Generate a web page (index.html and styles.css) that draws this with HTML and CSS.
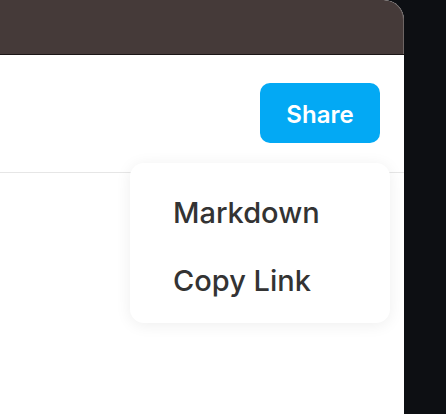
FILE: index.html
```html
<!DOCTYPE html>
<html lang="en">
<head>
  <meta charset="UTF-8" />
  <title>Share</title>
  <link rel="stylesheet" href="styles.css">
</head>
<body>
  <div class="window">
    <div class="titlebar"></div>
    <div class="toolbar">
      <button class="btn-share">Share</button>
    </div>
    <div class="content"></div>

    <ul class="menu">
      <li>Markdown</li>
      <li>Copy Link</li>
    </ul>
  </div>
</body>
</html>
```

FILE: styles.css
```css
body {
  margin: 0;
  padding: 0;
  background: #0d0f13;
  font-family: Inter, "Noto Sans", sans-serif;
}
.window {
  position: relative;
  width: 404px;
  height: 414px;
  background: #fff;
  border-top-right-radius: 20px;
  overflow: hidden;
}
.titlebar {
  height: 54px;
  background: #453a39;
  border-bottom: 1px solid #1b1616;
  box-shadow: inset -1px 0 0 #6d6564;
  border-top-right-radius: 20px;
}
.toolbar {
  display: flex;
  justify-content: flex-end;
  align-items: flex-start;
  padding: 28px 24px 0 0;
  box-sizing: border-box;
  height: 118px;
  border-bottom: 1px solid #e6e6e6;
}
.btn-share {
  width: 120px;
  height: 60px;
  padding: 3px 0 0;
  border: none;
  border-radius: 10px;
  background: #03a9f4;
  color: #fff;
  font-family: inherit;
  font-size: 24px;
  font-weight: 600;
  cursor: pointer;
}
.menu {
  position: absolute;
  top: 163px;
  left: 130px;
  width: 260px;
  height: 160px;
  margin: 0;
  padding: 16px 0 0 43px;
  box-sizing: border-box;
  list-style: none;
  background: #fff;
  border-radius: 14px;
  box-shadow: 0 2px 16px rgba(0,0,0,0.07);
}
.menu li {
  font-size: 29px;
  font-weight: 500;
  line-height: 68px;
  color: #333;
}
```
